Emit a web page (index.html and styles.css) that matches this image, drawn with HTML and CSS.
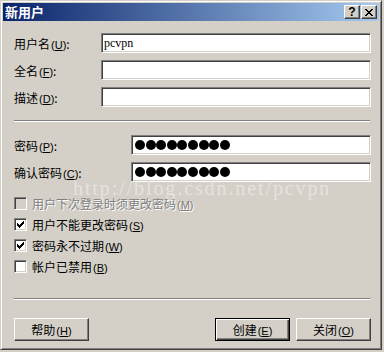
FILE: index.html
```html
<!DOCTYPE html>
<html lang="zh-CN">
<head>
<meta charset="UTF-8">
<title>新用户</title>
<link rel="stylesheet" href="styles.css">
</head>
<body>
<div class="window">
  <div class="titlebar">
    <span class="title">新用户</span>
    <div class="caption-buttons">
      <span class="cap-btn help">?</span>
      <span class="cap-btn">
        <svg width="8" height="7" viewBox="0 0 8 7" shape-rendering="crispEdges">
          <path d="M0 0h2v1h-2zM6 0h2v1h-2zM1 1h2v1h-2zM5 1h2v1h-2zM2 2h4v1h-4zM3 3h2v1h-2zM2 4h4v1h-4zM1 5h2v1h-2zM5 5h2v1h-2zM0 6h2v1h-2zM6 6h2v1h-2z" fill="#000"/>
        </svg>
      </span>
    </div>
  </div>

  <div class="content">
    <div class="fields">
      <div class="row">
        <span class="label">用户名<span class="key">(<u>U</u>)</span>:</span>
        <div class="edit">pcvpn</div>
      </div>
      <div class="row">
        <span class="label">全名<span class="key">(<u>F</u>)</span>:</span>
        <div class="edit"></div>
      </div>
      <div class="row">
        <span class="label">描述<span class="key">(<u>D</u>)</span>:</span>
        <div class="edit"></div>
      </div>
    </div>

    <div class="sep"></div>

    <div class="fields pw">
      <div class="row">
        <span class="label">密码<span class="key">(<u>P</u>)</span>:</span>
        <div class="edit dots">
          <i></i><i></i><i></i><i></i><i></i><i></i><i></i><i></i><i></i>
        </div>
      </div>
      <div class="row">
        <span class="label">确认密码<span class="key">(<u>C</u>)</span>:</span>
        <div class="edit dots">
          <i></i><i></i><i></i><i></i><i></i><i></i><i></i><i></i><i></i>
        </div>
      </div>
    </div>

    <div class="checks">
      <div class="check disabled">
        <span class="box"></span>
        <span>用户下次登录时须更改密码<span class="key">(<u>M</u>)</span></span>
      </div>
      <div class="check">
        <span class="box checked"></span>
        <span>用户不能更改密码<span class="key">(<u>S</u>)</span></span>
      </div>
      <div class="check">
        <span class="box checked"></span>
        <span>密码永不过期<span class="key">(<u>W</u>)</span></span>
      </div>
      <div class="check">
        <span class="box"></span>
        <span>帐户已禁用<span class="key">(<u>B</u>)</span></span>
      </div>
    </div>

    <div class="sep bottom"></div>

    <div class="buttons">
      <button class="btn">帮助<span class="key">(<u>H</u>)</span></button>
      <div class="spacer"></div>
      <button class="btn default">创建<span class="key">(<u>E</u>)</span></button>
      <button class="btn">关闭<span class="key">(<u>O</u>)</span></button>
    </div>
  </div>

  <!-- blog watermark stamped over the screenshot -->
  <div class="watermark">http://blog.csdn.net/pcvpn</div>
</div>
</body>
</html>
```

FILE: styles.css
```css
body {
  margin: 0;
  background-color: #d4d0c8;
  font-family: "Noto Sans CJK SC", "Liberation Sans", sans-serif;
  font-size: 12px;
  color: #000;
}

.window {
  position: relative;
  width: 382px;
  height: 350px;
  box-sizing: border-box;
  padding: 2px;
  border: 1px solid;
  border-color: #d4d0c8 #404040 #404040 #d4d0c8;
  box-shadow: inset 1px 1px #fff, inset -1px -1px #808080;
  background-color: #d4d0c8;
  display: flex;
  flex-direction: column;
}

.titlebar {
  height: 18px;
  display: flex;
  align-items: center;
  justify-content: space-between;
  padding: 0 2px 0 2px;
  background: linear-gradient(to right, #0a246a, #a6caf0);
}
.title {
  color: #fff;
  font-weight: bold;
  font-size: 13px;
  line-height: 18px;
}
.caption-buttons {
  display: flex;
  gap: 1px;
}
.cap-btn {
  width: 16px;
  height: 14px;
  box-sizing: border-box;
  display: flex;
  align-items: center;
  justify-content: center;
  background-color: #d4d0c8;
  border: 1px solid;
  border-color: #fff #404040 #404040 #fff;
  box-shadow: inset -1px -1px #808080;
}
.cap-btn.help {
  font-family: "Liberation Sans", sans-serif;
  font-weight: bold;
  font-size: 12px;
  line-height: 12px;
}

.content {
  padding: 12px 0 0 11px;
  width: 357px;
}

.fields {
  display: flex;
  flex-direction: column;
  gap: 7px;
}
.row {
  display: flex;
  align-items: center;
  height: 20px;
}
.label {
  width: 87px;
  flex: none;
  white-space: nowrap;
}
.pw .label {
  width: 117px;
}
.key {
  font-family: "Liberation Sans", sans-serif;
  font-size: 11px;
  margin-left: 1px;
}

.edit {
  flex: 1;
  height: 20px;
  box-sizing: border-box;
  background-color: #fff;
  border: 1px solid;
  border-color: #808080 #fff #fff #808080;
  box-shadow: inset 1px 1px #404040, inset -1px -1px #d4d0c8;
  padding: 0 2px;
  font-family: "Liberation Serif", serif;
  font-size: 12px;
  line-height: 18px;
}
.dots {
  display: flex;
  align-items: center;
  gap: 0.6px;
  padding-left: 3px;
}
.dots i {
  width: 10px;
  height: 10px;
  border-radius: 50%;
  background-color: #000;
}

.sep {
  width: 356px;
  border-top: 1px solid #808080;
  border-bottom: 1px solid #fff;
  margin: 13px 0;
}
.sep.bottom {
  margin: 25px 0 18px;
}

.checks {
  margin-top: 15px;
  display: flex;
  flex-direction: column;
  gap: 8px;
}
.check {
  display: flex;
  align-items: center;
  gap: 5px;
  height: 13px;
  white-space: nowrap;
}
.box {
  width: 13px;
  height: 13px;
  box-sizing: border-box;
  flex: none;
  background-color: #fff;
  border: 1px solid;
  border-color: #808080 #fff #fff #808080;
  box-shadow: inset 1px 1px #404040, inset -1px -1px #d4d0c8;
  position: relative;
}
.box.checked::after {
  content: "";
  position: absolute;
  left: 2px;
  top: 2px;
  width: 7px;
  height: 7px;
  background: url("data:image/svg+xml,%3Csvg xmlns='http://www.w3.org/2000/svg' width='7' height='7' shape-rendering='crispEdges'%3E%3Cpath d='M0 2h1v3h-1zM1 3h1v3h-1zM2 4h1v3h-1zM3 3h1v3h-1zM4 2h1v3h-1zM5 1h1v3h-1zM6 0h1v3h-1z'/%3E%3C/svg%3E") no-repeat;
}
.check.disabled {
  color: #808080;
  text-shadow: 1px 1px 0 #fff;
}
.check.disabled .box {
  background-color: #d4d0c8;
}

.buttons {
  display: flex;
  gap: 6px;
}
.spacer {
  flex: 1;
}
.btn {
  width: 75px;
  height: 23px;
  box-sizing: border-box;
  padding: 0;
  font: inherit;
  color: #000;
  background-color: #d4d0c8;
  border: 1px solid;
  border-color: #fff #404040 #404040 #fff;
  box-shadow: inset -1px -1px #808080, inset 1px 1px #d4d0c8;
}
.btn.default {
  border-color: #000;
  box-shadow: inset 1px 1px #fff, inset -1px -1px #404040, inset -2px -2px #808080;
}

.watermark {
  position: absolute;
  left: 72px;
  top: 180px;
  font-family: "Liberation Serif", serif;
  font-size: 20px;
  letter-spacing: 1.9px;
  line-height: 15px;
  color: rgba(236, 234, 230, 0.75);
  pointer-events: none;
  white-space: nowrap;
}
```
